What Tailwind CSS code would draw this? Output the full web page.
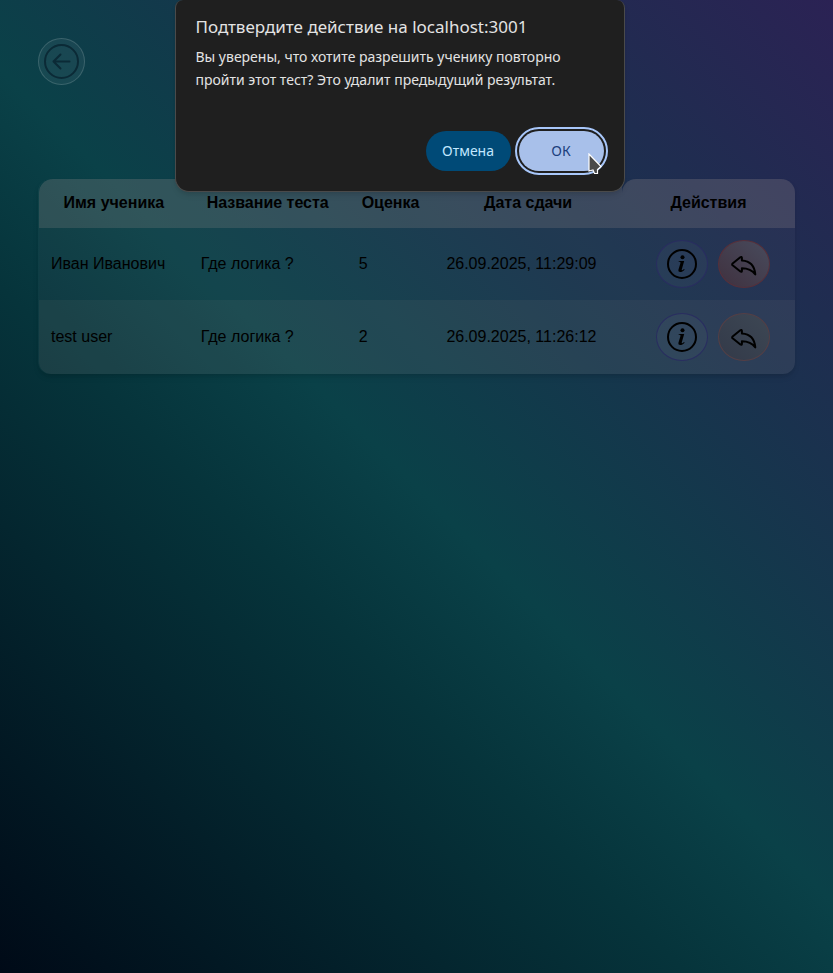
<!DOCTYPE html>
<html lang="ru">
<head>
<meta charset="utf-8">
<meta name="viewport" content="width=device-width, initial-scale=1">
<title>Результаты тестов</title>
<script src="https://cdn.jsdelivr.net/npm/@tailwindcss/browser@4"></script>
</head>
<body class="min-h-screen bg-[linear-gradient(45deg,#000a17_0%,#04262f_25%,#06343b_38%,#0a4148_50%,#1f2d50_82%,#2b2254_100%)] font-['Liberation_Sans',sans-serif] text-base text-black">
<svg class="hidden" aria-hidden="true">
  <symbol id="info" viewBox="0 0 32 32">
    <circle cx="16" cy="16" r="14" fill="none" stroke="currentColor" stroke-width="2"/>
    <circle cx="16.500" cy="9.200" r="2" fill="currentColor"/>
    <path d="M12.800 13h5.400l-2.400 8.300c-.3 1.200.3 1.300 2.300-.3l.5.700c-2.800 3-7 3.200-6.100-.2l1.900-6.300c.3-1-.2-1.300-1.800-1.400z" fill="currentColor"/>
  </symbol>
  <symbol id="reply" viewBox="0 0 28 24">
    <path d="M2.600 11.600 10.300 5.300c.8-.6 1.600-.3 1.600.6v2.500c7.300.4 12.600 4.500 13.400 14-3.500-4.800-7.400-6.100-13.400-6.100v2.600c0 .9-.8 1.100-1.500.6L2.600 13.300c-.6-.5-.6-1.200 0-1.700z" fill="none" stroke="currentColor" stroke-width="2" stroke-linejoin="round"/>
  </symbol>
</svg>

<main class="px-[38px] pt-[38px]">
  <button type="button" aria-label="Назад" class="flex size-[47px] items-center justify-center rounded-full border border-white/15 bg-white/5 text-[#0b2a36]">
    <svg class="size-9" viewBox="0 0 36 36" fill="none" stroke="currentColor" stroke-width="2">
      <circle cx="17.500" cy="17.500" r="16.500"/>
      <path d="M25.500 17.500h-16m7-7-7 7 7 7" stroke-linecap="round" stroke-linejoin="round"/>
    </svg>
  </button>

  <table class="mt-[94px] w-full table-fixed border-separate border-spacing-0 rounded-xl border-l border-white/3 shadow-md">
    <colgroup>
      <col class="w-[19.8%]"><col class="w-[20.9%]"><col class="w-[11.6%]"><col class="w-[24.8%]"><col class="w-[22.9%]">
    </colgroup>
    <thead>
      <tr class="h-[49px] *:bg-[#978c8b]/27 *:px-0 *:pt-0 *:pb-0.5">
        <th class="rounded-tl-[14px]">Имя ученика</th>
        <th>Название теста</th>
        <th>Оценка</th>
        <th>Дата сдачи</th>
        <th class="rounded-t-[14px]">Действия</th>
      </tr>
    </thead>
    <tbody>
      <tr class="h-[72px] *:bg-[#7c7b88]/8 *:px-3 *:py-0">
        <td>Иван Иванович</td>
        <td>Где логика ?</td>
        <td>5</td>
        <td>26.09.2025, 11:29:09</td>
        <td>
          <div class="ml-[10px] flex justify-center gap-[10px]">
            <button type="button" aria-label="Подробнее" class="flex h-12 w-[52px] items-center justify-center rounded-[50%] border border-[#292d60] bg-white/3"><svg class="size-8"><use href="#info"/></svg></button>
            <button type="button" aria-label="Разрешить повторно" class="flex h-12 w-[52px] items-center justify-center rounded-[50%] border border-[#57303a] bg-linear-to-tr from-[#3f313f] to-[#484b5d]"><svg class="h-6 w-7"><use href="#reply"/></svg></button>
          </div>
        </td>
      </tr>
      <tr class="h-[74px] *:bg-[#948c8b]/15 *:px-3 *:py-0">
        <td class="rounded-bl-xl">test user</td>
        <td>Где логика ?</td>
        <td>2</td>
        <td>26.09.2025, 11:26:12</td>
        <td class="rounded-br-xl">
          <div class="ml-[10px] flex justify-center gap-[10px]">
            <button type="button" aria-label="Подробнее" class="flex h-12 w-[52px] items-center justify-center rounded-[50%] border border-[#292d60] bg-white/3"><svg class="size-8"><use href="#info"/></svg></button>
            <button type="button" aria-label="Разрешить повторно" class="flex h-12 w-[52px] items-center justify-center rounded-[50%] border border-[#543f45] bg-linear-to-tr from-[#333a49] to-[#3d4754]"><svg class="h-6 w-7"><use href="#reply"/></svg></button>
          </div>
        </td>
      </tr>
    </tbody>
  </table>
</main>

<div role="dialog" aria-modal="true" aria-labelledby="dialog-title" class="absolute top-0 left-[calc(50%-17px)] w-[450px] -translate-x-1/2 rounded-[14px] rounded-t-lg border border-t-0 border-[#4a4a4a] bg-[#1f1f1f] px-5 pt-[15px] pb-5 font-['Noto_Sans',sans-serif] text-[#e3e3e3] shadow-md">
  <h1 id="dialog-title" class="text-[17px] leading-6">Подтвердите действие на localhost:3001</h1>
  <p class="mt-1.5 text-sm leading-[23px]">Вы уверены, что хотите разрешить ученику повторно пройти этот тест? Это удалит предыдущий результат.</p>
  <div class="mt-10 flex justify-end gap-2 text-sm">
    <button type="button" class="h-10 w-[85px] rounded-full bg-[#004a77] text-[#c2e7ff]">Отмена</button>
    <button type="button" class="relative h-10 w-[85px] rounded-full bg-[#a8c0ea] text-[#1c3f7d] outline-2 outline-offset-2 outline-[#a8c7fa]">ОК
      <svg class="absolute top-[22px] left-[69px] h-[22px] w-[14px]" viewBox="0 0 14 22" fill="#4a4a4a" stroke="#fff" stroke-width="1.200" aria-hidden="true"><path d="M1 1v17l4-1 1.500 3.500h3v-4l3.500-3z"/></svg>
    </button>
  </div>
</div>
</body>
</html>
